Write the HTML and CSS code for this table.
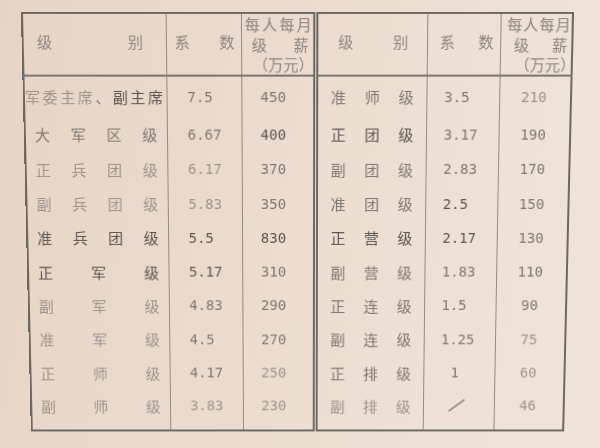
FILE: index.html
```html
<!DOCTYPE html>
<html lang="zh">
<head>
<meta charset="utf-8">
<title>级别系数与级薪</title>
<link rel="stylesheet" href="styles.css">
</head>
<body>
<div class="page">
<table class="grid">
<colgroup>
<col class="w-lbl"><col class="w-num"><col class="w-pay">
<col class="w-lbl2"><col class="w-num2"><col class="w-pay2">
</colgroup>
<thead>
<tr>
<th class="lbl-h"><div class="spread"><span>级</span><span>别</span></div></th>
<th class="num-h"><div class="spread"><span>系</span><span>数</span></div></th>
<th class="pay-h"><div class="spread"><span>每</span><span>人</span><span>每</span><span>月</span></div><div class="spread ln2"><span>级</span><span>薪</span></div><div class="spread ln3"><span>（</span><span>万</span><span>元</span><span>）</span></div></th>
<th class="lbl-h r mid"><div class="spread"><span>级</span><span>别</span></div></th>
<th class="num-h r"><div class="spread"><span>系</span><span>数</span></div></th>
<th class="pay-h r"><div class="spread"><span>每</span><span>人</span><span>每</span><span>月</span></div><div class="spread ln2"><span>级</span><span>薪</span></div><div class="spread ln3"><span>（</span><span>万</span><span>元</span><span>）</span></div></th>
</tr>
</thead>
<tbody>
<tr class="first">
<td class="lbl wide"><div class="spread"><span class="c1">军</span><span class="c1">委</span><span class="c1">主</span><span class="c1">席</span><span class="c2">、</span><span class="c3">副</span><span class="c3">主</span><span class="c3">席</span></div></td>
<td class="num c2">7.5</td><td class="pay c2">450</td>
<td class="lbl r mid c2"><div class="spread"><span>准</span><span>师</span><span>级</span></div></td>
<td class="num r c2">3.5</td><td class="pay r c1">210</td>
</tr>
<tr>
<td class="lbl c2"><div class="spread"><span>大</span><span>军</span><span>区</span><span>级</span></div></td>
<td class="num c2">6.67</td><td class="pay c3">400</td>
<td class="lbl r mid c3"><div class="spread"><span>正</span><span>团</span><span>级</span></div></td>
<td class="num r c2">3.17</td><td class="pay r c2">190</td>
</tr>
<tr>
<td class="lbl c1"><div class="spread"><span>正</span><span>兵</span><span>团</span><span>级</span></div></td>
<td class="num c1">6.17</td><td class="pay c2">370</td>
<td class="lbl r mid c2"><div class="spread"><span>副</span><span>团</span><span>级</span></div></td>
<td class="num r c2">2.83</td><td class="pay r c2">170</td>
</tr>
<tr>
<td class="lbl c1"><div class="spread"><span>副</span><span>兵</span><span>团</span><span>级</span></div></td>
<td class="num c1">5.83</td><td class="pay c2">350</td>
<td class="lbl r mid c2"><div class="spread"><span>准</span><span>团</span><span>级</span></div></td>
<td class="num r c3">2.5</td><td class="pay r c2">150</td>
</tr>
<tr>
<td class="lbl c3"><div class="spread"><span>准</span><span>兵</span><span>团</span><span>级</span></div></td>
<td class="num c3">5.5</td><td class="pay c3">830</td>
<td class="lbl r mid c3"><div class="spread"><span>正</span><span>营</span><span>级</span></div></td>
<td class="num r c3">2.17</td><td class="pay r c2">130</td>
</tr>
<tr>
<td class="lbl c3"><div class="spread"><span>正</span><span>军</span><span>级</span></div></td>
<td class="num c3">5.17</td><td class="pay c2">310</td>
<td class="lbl r mid c2"><div class="spread"><span>副</span><span>营</span><span>级</span></div></td>
<td class="num r c2">1.83</td><td class="pay r c2">110</td>
</tr>
<tr>
<td class="lbl c1"><div class="spread"><span>副</span><span>军</span><span>级</span></div></td>
<td class="num c2">4.83</td><td class="pay c2">290</td>
<td class="lbl r mid c2"><div class="spread"><span>正</span><span>连</span><span>级</span></div></td>
<td class="num r c2">1.5</td><td class="pay r c2">90</td>
</tr>
<tr>
<td class="lbl c1"><div class="spread"><span>准</span><span>军</span><span>级</span></div></td>
<td class="num c2">4.5</td><td class="pay c2">270</td>
<td class="lbl r mid c2"><div class="spread"><span>副</span><span>连</span><span>级</span></div></td>
<td class="num r c2">1.25</td><td class="pay r c1">75</td>
</tr>
<tr>
<td class="lbl c1"><div class="spread"><span>正</span><span>师</span><span>级</span></div></td>
<td class="num c2">4.17</td><td class="pay c1">250</td>
<td class="lbl r mid c2"><div class="spread"><span>正</span><span>排</span><span>级</span></div></td>
<td class="num r c2 one">1</td><td class="pay r c1">60</td>
</tr>
<tr class="last">
<td class="lbl c1"><div class="spread"><span>副</span><span>师</span><span>级</span></div></td>
<td class="num c1">3.83</td><td class="pay c1">230</td>
<td class="lbl r mid c1"><div class="spread"><span>副</span><span>排</span><span>级</span></div></td>
<td class="num r c2 one"><svg class="slash" width="18" height="14" viewBox="0 0 18 14"><line x1="1" y1="13" x2="17" y2="1"/></svg></td><td class="pay r c1">46</td>
</tr>
</tbody>
</table>
</div>
</body>
</html>
```
FILE: styles.css
```css
html, body {
  margin: 0;
  padding: 0;
}
body {
  width: 600px;
  height: 448px;
  overflow: hidden;
  background: linear-gradient(100deg, #e6d5c7 0%, #ebdccf 45%, #f0e4d9 100%);
  font-family: "Noto Sans CJK SC", "Noto Sans", sans-serif;
  color: #7d7670;
}
.page {
  padding: 15px 0 0 26px;
}
.grid {
  border-collapse: collapse;
  table-layout: fixed;
  width: 541px;
  border: 2px solid #6d6762;
  transform: perspective(1000px) rotateX(-5deg);
  transform-origin: 50% 50%;
}
.w-lbl { width: 141px; }
.w-num { width: 74px; }
.w-pay { width: 73px; }
.w-lbl2 { width: 110px; }
.w-num2 { width: 72px; }
.w-pay2 { width: 71px; }

th, td {
  padding: 0;
  border-left: 1px solid #938b85;
  vertical-align: middle;
}
th.mid, td.mid {
  border-left: 5px double #6e6863;
}
thead th {
  height: 48px;
  border-bottom: 2px solid #7d7671;
  font-weight: normal;
  color: #8c847e;
  font-size: 15px;
  line-height: 19.5px;
}
.spread {
  display: flex;
  justify-content: space-between;
}
.lbl-h { padding: 0 22px 5px 13px; }
.lbl-h.r { padding: 0 18px 5px 20px; }
.num-h { padding: 0 6px 5px 8px; }
.num-h.r { padding: 0 6px 5px 12px; }
.pay-h { padding: 0 1px 0 3px; }
.pay-h .ln2 { padding: 0 3px 0 7px; }
.pay-h .ln3 { padding: 0 3px 0 8px; }
.pay-h.r { padding: 0 1px 0 6px; }

td {
  height: 34.3px;
  font-size: 15px;
}
tr.first td { padding-top: 3px; padding-bottom: 3px; }
tr.last td { padding-bottom: 8px; }

td.lbl { padding-left: 9px; padding-right: 9px; }
td.lbl.wide { padding-left: 0; padding-right: 3px; }
td.lbl.r { padding-left: 13px; padding-right: 12px; }

td.num {
  font-family: "DejaVu Sans Mono", "Liberation Mono", monospace;
  font-size: 14px;
  padding-left: 20px;
}
td.num.r { padding-left: 17px; }
td.num.one { padding-left: 27px; }
td.pay {
  font-family: "DejaVu Sans Mono", "Liberation Mono", monospace;
  font-size: 14px;
  text-align: center;
  padding-right: 8px;
}
td.pay.r { padding-right: 2px; }

.c1 { color: #9d948d; }
.c2 { color: #7f7872; }
.c3 { color: #5b5551; }

.slash {
  display: block;
  margin-left: -3px;
}
.slash line {
  stroke: #77706a;
  stroke-width: 1.4;
}
```
